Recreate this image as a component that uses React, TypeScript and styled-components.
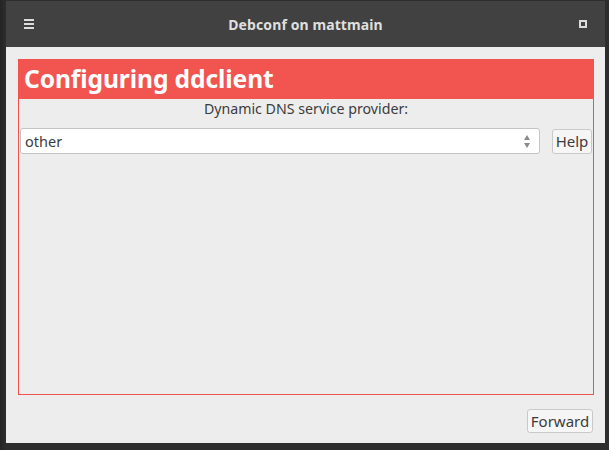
import React from "react";
import styled, { createGlobalStyle } from "styled-components";

const Global = createGlobalStyle`
  html, body { margin: 0; padding: 0; background: #2b2b2b; }
  body { font-family: "Noto Sans", "DejaVu Sans", sans-serif; }
  #root { width: 609px; height: 450px; overflow: hidden; }
`;

const Screen = styled.div`
  width: 609px;
  height: 450px;
  box-sizing: border-box;
  padding: 1px 4px 0 6px;
  background: linear-gradient(to right, #242424 0px, #2d2d2d 6px);
`;

const Window = styled.div`
  width: 599px;
  height: 442px;
  display: flex;
  flex-direction: column;
  background: #ededed;
`;

const TitleBar = styled.div`
  height: 46px;
  flex: none;
  background: #414141;
  display: grid;
  grid-template-columns: 40px 1fr 40px;
  align-items: center;
`;

const Title = styled.div`
  text-align: center;
  color: #dfdfdf;
  font-weight: 700;
  font-size: 14px;
  letter-spacing: 0.1px;
`;

const IconCell = styled.div<{ $align: "start" | "end" }>`
  display: flex;
  justify-content: ${(p) => (p.$align === "start" ? "flex-start" : "flex-end")};
  padding: ${(p) => (p.$align === "start" ? "0 0 0 18px" : "0 18px 0 0")};
`;

const Hamburger = styled.div`
  width: 10px;
  height: 10px;
  display: flex;
  flex-direction: column;
  justify-content: space-between;
  span {
    display: block;
    height: 2px;
    background: #dcdcdc;
  }
`;

const MaxBox = styled.div`
  width: 8px;
  height: 8px;
  box-sizing: border-box;
  border: 2px solid #dcdcdc;
`;

const Content = styled.div`
  flex: 1;
  display: flex;
  flex-direction: column;
  padding: 12px 12px 10px 12px;
`;

const Frame = styled.div`
  width: 576px;
  height: 336px;
  box-sizing: border-box;
  border: 1px solid #f0524d;
  border-top: none;
  display: flex;
  flex-direction: column;
`;

const Header = styled.div`
  height: 40px;
  margin: 0 -1px;
  background: #f2554f;
  color: #ffffff;
  font-weight: 700;
  font-size: 24.6px;
  line-height: 40px;
  padding-left: 6px;
  letter-spacing: -0.1px;
`;

const Prompt = styled.div`
  text-align: center;
  color: #3c3c3c;
  font-size: 14.2px;
  line-height: 20px;
  padding-top: 0px;
`;

const Row = styled.div`
  display: flex;
  align-items: center;
  gap: 12px;
  margin-top: 9px;
  padding: 0 1px 0 1px;
`;

const Combo = styled.div`
  flex: 1;
  height: 26px;
  box-sizing: border-box;
  background: #fff;
  border: 1px solid #c4c4c4;
  border-radius: 3px;
  display: flex;
  align-items: center;
  justify-content: space-between;
  padding: 0 9px 0 4px;
  color: #3c3c3c;
  font-size: 14.5px;
`;

const Arrows = styled.div`
  display: flex;
  flex-direction: column;
  gap: 3px;
  align-items: center;
`;

const Tri = styled.div<{ $up?: boolean }>`
  width: 0;
  height: 0;
  border-left: 3px solid transparent;
  border-right: 3px solid transparent;
  ${(p) =>
    p.$up
      ? "border-bottom: 5px solid #8a8a8a;"
      : "border-top: 5px solid #8a8a8a;"}
`;

const Button = styled.button<{ $w: number; $h: number }>`
  width: ${(p) => p.$w}px;
  height: ${(p) => p.$h}px;
  box-sizing: border-box;
  background: #f6f6f6;
  border: 1px solid #c9c9c9;
  border-radius: 3px;
  color: #3c3c3c;
  font-family: "Noto Sans", "DejaVu Sans", sans-serif;
  font-size: 15px;
  padding: 0;
  line-height: 1;
  flex: none;
`;

const Footer = styled.div`
  display: flex;
  justify-content: flex-end;
  margin-top: 14px;
`;

export default function App() {
  return (
    <>
      <Global />
      <Screen>
        <Window>
          <TitleBar>
            <IconCell $align="start">
              <Hamburger>
                <span />
                <span />
                <span />
              </Hamburger>
            </IconCell>
            <Title>Debconf on mattmain</Title>
            <IconCell $align="end">
              <MaxBox />
            </IconCell>
          </TitleBar>
          <Content>
            <Frame>
              <Header>Configuring ddclient</Header>
              <Prompt>Dynamic DNS service provider:</Prompt>
              <Row>
                <Combo>
                  <span>other</span>
                  <Arrows>
                    <Tri $up />
                    <Tri />
                  </Arrows>
                </Combo>
                <Button $w={40} $h={25}>Help</Button>
              </Row>
            </Frame>
            <Footer>
              <Button $w={66} $h={24}>Forward</Button>
            </Footer>
          </Content>
        </Window>
      </Screen>
    </>
  );
}
